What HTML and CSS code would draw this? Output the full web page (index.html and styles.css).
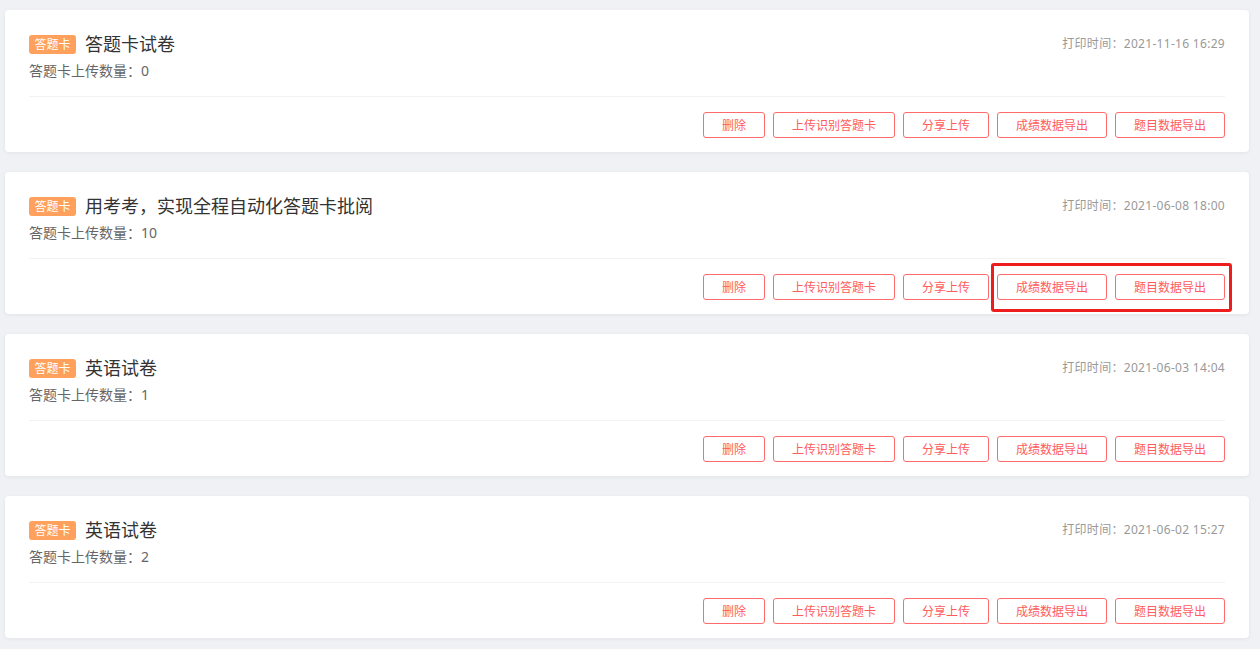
FILE: index.html
```html
<!DOCTYPE html>
<html lang="zh-CN">
<head>
<meta charset="utf-8">
<title>答题卡列表</title>
<link rel="stylesheet" href="styles.css">
</head>
<body>
<div class="list">
  <div class="card">
    <div class="head">
      <div class="title-wrap"><span class="badge">答题卡</span><span class="title">答题卡试卷</span></div>
      <span class="time">打印时间：2021-11-16 16:29</span>
    </div>
    <div class="count">答题卡上传数量：0</div>
    <div class="divider"></div>
    <div class="actions">
      <button class="btn">删除</button>
      <button class="btn">上传识别答题卡</button>
      <button class="btn">分享上传</button>
      <button class="btn">成绩数据导出</button>
      <button class="btn">题目数据导出</button>
    </div>
  </div>
  <div class="card">
    <div class="head">
      <div class="title-wrap"><span class="badge">答题卡</span><span class="title">用考考，实现全程自动化答题卡批阅</span></div>
      <span class="time">打印时间：2021-06-08 18:00</span>
    </div>
    <div class="count">答题卡上传数量：10</div>
    <div class="divider"></div>
    <div class="actions">
      <button class="btn">删除</button>
      <button class="btn">上传识别答题卡</button>
      <button class="btn">分享上传</button>
      <button class="btn">成绩数据导出</button>
      <button class="btn">题目数据导出</button>
    </div>
    <div class="highlight"></div>
  </div>
  <div class="card">
    <div class="head">
      <div class="title-wrap"><span class="badge">答题卡</span><span class="title">英语试卷</span></div>
      <span class="time">打印时间：2021-06-03 14:04</span>
    </div>
    <div class="count">答题卡上传数量：1</div>
    <div class="divider"></div>
    <div class="actions">
      <button class="btn">删除</button>
      <button class="btn">上传识别答题卡</button>
      <button class="btn">分享上传</button>
      <button class="btn">成绩数据导出</button>
      <button class="btn">题目数据导出</button>
    </div>
  </div>
  <div class="card">
    <div class="head">
      <div class="title-wrap"><span class="badge">答题卡</span><span class="title">英语试卷</span></div>
      <span class="time">打印时间：2021-06-02 15:27</span>
    </div>
    <div class="count">答题卡上传数量：2</div>
    <div class="divider"></div>
    <div class="actions">
      <button class="btn">删除</button>
      <button class="btn">上传识别答题卡</button>
      <button class="btn">分享上传</button>
      <button class="btn">成绩数据导出</button>
      <button class="btn">题目数据导出</button>
    </div>
  </div>
</div>
</body>
</html>
```

FILE: styles.css
```css
html, body {
  margin: 0;
  padding: 0;
  background: #f0f1f5;
}
body {
  font-family: "Noto Sans", "Noto Sans CJK SC", sans-serif;
  color: #333;
  height: 649px;
  overflow: hidden;
}
.list {
  padding: 10px 11px 0 5px;
  display: flex;
  flex-direction: column;
  gap: 20px;
}
.card {
  position: relative;
  background: #fff;
  border-radius: 4px;
  box-shadow: 0 1px 4px rgba(0, 0, 0, 0.06);
  padding: 21px 24px 14px 24px;
  height: 142px;
  box-sizing: border-box;
}
.head {
  display: flex;
  justify-content: space-between;
  align-items: center;
  height: 26px;
}
.title-wrap {
  display: flex;
  align-items: center;
}
.badge {
  display: inline-block;
  width: 47px;
  height: 19px;
  line-height: 19px;
  text-align: center;
  background: #ffa05c;
  color: #fff;
  font-size: 12px;
  border-radius: 3px;
  margin-right: 9px;
}
.title {
  font-size: 18px;
  line-height: 26px;
  color: #333;
}
.time {
  font-size: 12px;
  color: #999;
  line-height: 20px;
  letter-spacing: 0.3px;
}
.count {
  font-size: 14px;
  color: #666;
  line-height: 26px;
  height: 26px;
  padding-top: 1px;
}
.divider {
  margin-top: 12px;
  height: 1px;
  background: #f2f2f2;
}
.actions {
  margin-top: 15px;
  display: flex;
  justify-content: flex-end;
  gap: 8px;
}
.btn {
  height: 26px;
  box-sizing: border-box;
  padding: 0 18px;
  border: 1px solid #ff6a6a;
  border-radius: 3px;
  background: #fff;
  color: #ff5c5c;
  font-family: "Noto Sans CJK SC", sans-serif;
  font-size: 12px;
  line-height: 24px;
  cursor: pointer;
}
.highlight {
  position: absolute;
  top: 91px;
  right: 17px;
  width: 241px;
  height: 49px;
  box-sizing: border-box;
  border: 3px solid #ee1d1d;
  border-radius: 3px;
  pointer-events: none;
}
```
